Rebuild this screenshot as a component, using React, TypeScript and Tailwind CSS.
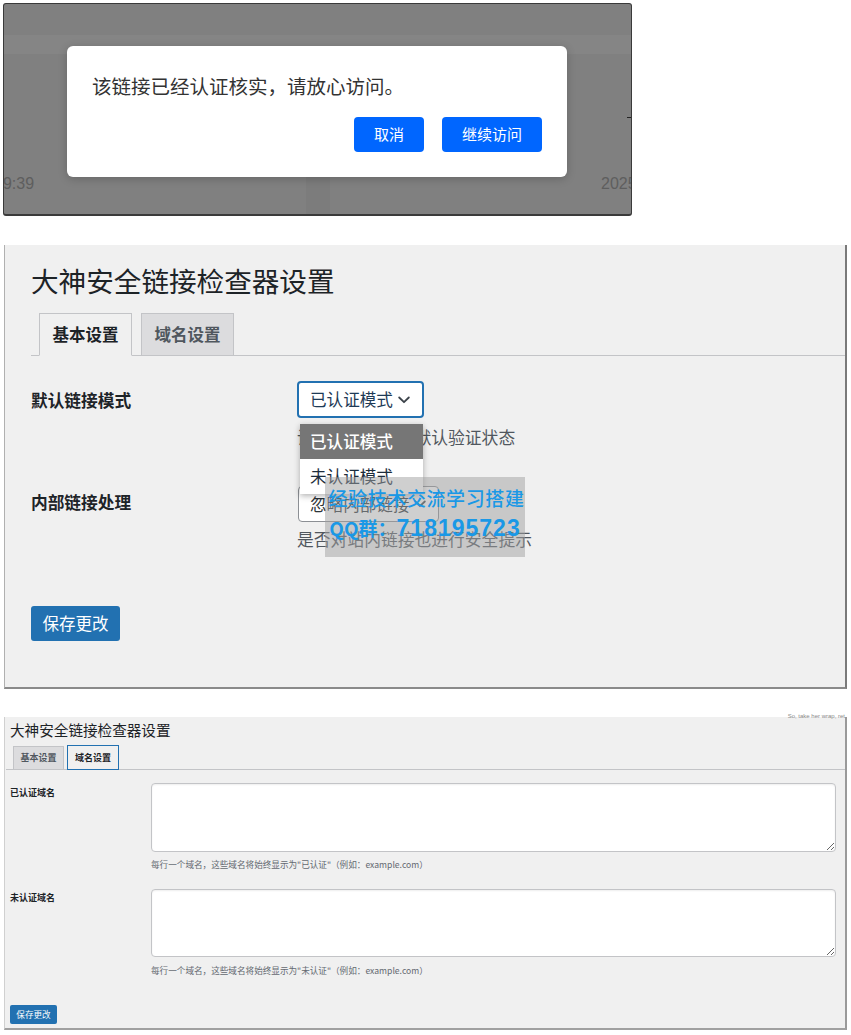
import React from "react";

const cjk = "font-['Noto_Sans_CJK_SC','Noto_Sans',sans-serif]";

function Chevron({ className }: { className?: string }) {
  return (
    <svg className={className} width="12" height="8" viewBox="0 0 12 8" fill="none">
      <path d="M1.2 1.5 6 6.2l4.8-4.7" stroke="#3c434a" strokeWidth="1.8" strokeLinecap="round" strokeLinejoin="round" />
    </svg>
  );
}

// first shot: the confirm dialog over the dimmed page
function ConfirmShot() {
  return (
    <div className="relative w-[629px] h-[213px] bg-[#808080] border border-[#3a3a3a] border-b-2 rounded-[3px] overflow-hidden flex flex-col">
      <div className="mt-[31px] h-[19px] bg-[#858585]" />
      <div className="mt-auto flex items-start h-[38px]">
        <div className="w-[292px] text-[16px] leading-[16px] text-[#5e5e5e] font-['Liberation_Sans',sans-serif] -ml-[10px]">19:39</div>
        <div className="w-[24px] h-full bg-[#7c7c7c] ml-[20px]" />
        <div className="ml-auto text-[16px] leading-[16px] text-[#5e5e5e] font-['Liberation_Sans',sans-serif] -mr-[12px] w-[42px] whitespace-nowrap">2025</div>
      </div>
      <div className="absolute right-0 top-[113px] w-[4px] h-[1px] bg-[#222]" />

      <div className="absolute left-[63px] top-[42px] w-[500px] h-[131px] bg-white rounded-[6px] shadow-[0_2px_10px_rgba(0,0,0,0.2)] pt-[27px] pl-[25px] pr-[25px]">
        <p className={`${cjk} text-[19.5px] leading-[26px] text-[#333]`}>该链接已经认证核实，请放心访问。</p>
        <div className="mt-[18px] flex justify-end gap-[18px]">
          <button className={`${cjk} w-[70px] h-[35px] rounded-[4px] bg-[#0066ff] text-white text-[15px]`}>取消</button>
          <button className={`${cjk} w-[100px] h-[35px] rounded-[4px] bg-[#0066ff] text-white text-[15px]`}>继续访问</button>
        </div>
      </div>
    </div>
  );
}

// second shot: basic settings tab with select opened
function BasicSettingsShot() {
  return (
    <div className={`${cjk} relative w-[843px] h-[444px] bg-[#f0f0f0] border-l border-l-[#b0b0b0] border-r-2 border-r-[#7a7a7a] border-b-2 border-b-[#8a8a8a] pl-[26px] pt-[17px]`}>
      <h1 className="text-[27.6px] leading-[36px] text-[#1d2327]">大神安全链接检查器设置</h1>

      <div className="mt-[15px] flex items-end h-[43px] border-b border-[#c3c4c7]">
        <div className="ml-[8px] w-[93px] h-[43px] -mb-px border border-[#c3c4c7] border-b-[#f0f0f0] bg-[#f0f0f0] flex items-center justify-center text-[16.5px] font-bold text-[#1d2327]">
          基本设置
        </div>
        <div className="ml-[9px] w-[93px] h-[43px] -mb-px border border-[#c3c4c7] bg-[#dcdcde] flex items-center justify-center text-[16.5px] font-semibold text-[#50575e]">
          域名设置
        </div>
      </div>

      <div className="mt-[25px] flex items-start">
        <div className="w-[266px] pt-[7px] text-[16.7px] leading-[24px] font-bold text-[#1d2327]">默认链接模式</div>
        <div>
          <div className="w-[127px] h-[37px] rounded-[4px] border-2 border-[#2271b1] bg-white flex items-center pl-[11px] pr-[12px] text-[16.6px] text-[#1e3a56]">
            <span>已认证模式</span>
            <Chevron className="ml-auto" />
          </div>
          <p className="mt-[7px] text-[16.8px] leading-[24px] text-[#50575e]">设置外部链接的默认验证状态</p>
        </div>
      </div>

      <div className="mt-[37px] flex items-start">
        <div className="w-[267px] pt-[4px] text-[16.7px] leading-[24px] font-bold text-[#1d2327]">内部链接处理</div>
        <div>
          <div className="w-[141px] h-[36px] rounded-[4px] border border-[#8c8f94] bg-white flex items-center pl-[11px] pr-[12px] text-[16.6px] text-[#2c3338]">
            <span>忽略内部链接</span>
            <Chevron className="ml-auto" />
          </div>
          <p className="mt-[5px] -ml-px text-[16.8px] leading-[24px] text-[#50575e]">是否对站内链接也进行安全提示</p>
        </div>
      </div>

      <button className="mt-[55px] w-[89px] h-[35px] rounded-[3px] bg-[#2271b1] text-white text-[16.5px]">保存更改</button>

      {/* open dropdown list */}
      <div className="absolute left-[295px] top-[179px] w-[123px] bg-white shadow-[0_2px_6px_rgba(0,0,0,0.3)] text-[16.6px]">
        <div className="h-[35px] bg-[#767676] text-white font-medium flex items-center pl-[10px]">已认证模式</div>
        <div className="h-[35px] bg-white text-[#1d2d3c] flex items-center pl-[10px]">未认证模式</div>
      </div>

      {/* watermark */}
      <div className="absolute left-[320px] top-[232px] w-[200px] h-[80px] bg-[#a0a0a0]/50 flex flex-col items-center">
        <div className="mt-[9px] pl-[3px] whitespace-nowrap text-[19px] leading-[24px] tracking-[0.6px] text-[#1a98e6] font-['Noto_Sans_CJK_SC',serif] font-medium">经验技术交流学习搭建</div>
        <div className="mt-[5px] flex items-baseline whitespace-nowrap text-[#1a98e6] font-bold">
          <span className="text-[19px] leading-[26px] font-['Noto_Sans_CJK_SC',sans-serif]">QQ群：</span>
          <span className="text-[23px] leading-[26px] tracking-[1px] font-['Liberation_Sans',sans-serif]">718195723</span>
        </div>
      </div>
    </div>
  );
}

// third shot: domain settings tab (small)
function DomainSettingsShot() {
  return (
    <div className={`${cjk} relative w-[843px] h-[313px] bg-[#f0f0f0] border-l border-l-[#d0d0d0] border-r-2 border-r-[#9a9a9a] border-b-2 border-b-[#a0a0a0] pl-px pt-[4px]`}>
      <div className="absolute right-0 -top-[5px] text-[6px] leading-[8px] text-[#8a8a8a] font-['Liberation_Sans',sans-serif] whitespace-nowrap">So, take her wrap, ret</div>

      <h1 className="ml-[4px] text-[14.6px] leading-[18px] text-[#1d2327]">大神安全链接检查器设置</h1>

      <div className="mt-[6px] flex items-end h-[25px] border-b border-[#c3c4c7]">
        <div className="ml-[7px] w-[51px] h-[24px] -mb-px border border-[#c3c4c7] bg-[#dcdcde] flex items-center justify-center text-[9px] font-semibold text-[#50575e]">
          基本设置
        </div>
        <div className="ml-[3px] w-[52px] h-[25px] -mb-px border-[1.5px] border-[#2271b1] bg-[#f0f0f0] flex items-center justify-center text-[9px] font-bold text-[#1d2327]">
          域名设置
        </div>
      </div>

      <div className="mt-[13px] flex items-start">
        <div className="ml-[4px] w-[141px] pt-[4px] text-[9px] leading-[12px] font-bold text-[#1d2327]">已认证域名</div>
        <div>
          <textarea readOnly className="block w-[685px] h-[69px] rounded-[4px] border border-[#c3c4c7] bg-white shadow-[inset_0_1px_2px_rgba(0,0,0,0.07)]" />
          <p className="mt-[6px] text-[8.6px] leading-[12px] text-[#646970]">每行一个域名，这些域名将始终显示为"已认证"（例如：example.com）</p>
        </div>
      </div>

      <div className="mt-[19px] flex items-start">
        <div className="ml-[4px] w-[141px] pt-[3px] text-[9px] leading-[12px] font-bold text-[#1d2327]">未认证域名</div>
        <div>
          <textarea readOnly className="block w-[685px] h-[68px] rounded-[4px] border border-[#c3c4c7] bg-white shadow-[inset_0_1px_2px_rgba(0,0,0,0.07)]" />
          <p className="mt-[7px] text-[8.6px] leading-[12px] text-[#646970]">每行一个域名，这些域名将始终显示为"未认证"（例如：example.com）</p>
        </div>
      </div>

      <button className="ml-[4px] mt-[29px] w-[47px] h-[19px] rounded-[2px] bg-[#2271b1] text-white text-[8.6px] leading-[19px]">保存更改</button>
    </div>
  );
}

export default function App() {
  return (
    <div className="w-[851px] h-[1035px] bg-white overflow-hidden">
      <div className="pl-[3px] pt-[3px]">
        <ConfirmShot />
      </div>
      <div className="pl-[4px] pt-[29px]">
        <BasicSettingsShot />
      </div>
      <div className="pl-[4px] pt-[28px]">
        <DomainSettingsShot />
      </div>
    </div>
  );
}
